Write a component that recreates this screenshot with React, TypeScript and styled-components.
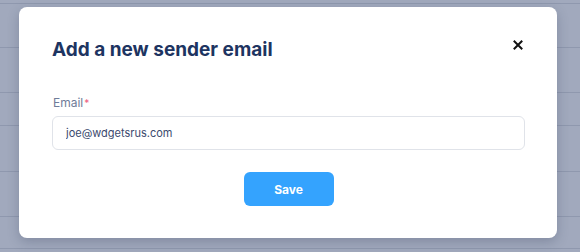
import React from 'react';
import styled, { createGlobalStyle } from 'styled-components';

const GlobalStyle = createGlobalStyle`
  html, body {
    margin: 0;
    padding: 0;
    width: 580px;
    height: 252px;
    overflow: hidden;
    font-family: Inter, "Noto Sans", sans-serif;
  }
`

const Page = styled.div`
  position: relative;
  width: 580px;
  height: 252px;
  background: #a1a9bd;
  overflow: hidden;
`

const BackTable = styled.div`
  display: flex;
  flex-direction: column;
  padding-top: 3px;
`

const BackRow = styled.div<{ h: number }>`
  height: ${props => props.h}px;
  border-top: 1px solid #8f98ae;
  box-sizing: border-box;
`

const Modal = styled.div`
  position: absolute;
  left: 19px;
  top: 7px;
  width: 538px;
  height: 231px;
  box-sizing: border-box;
  background: #fff;
  border-radius: 8px;
  box-shadow: 0 4px 12px rgba(40, 50, 80, 0.25);
  padding: 31px 32px 0 33px;
  display: flex;
  flex-direction: column;
`

const Header = styled.div`
  display: flex;
  align-items: flex-start;
  justify-content: space-between;
`

const Title = styled.h2`
  margin: 0;
  font-size: 19px;
  line-height: 24px;
  font-weight: 700;
  color: #1d3461;
`

const CloseButton = styled.button`
  border: none;
  background: none;
  padding: 0;
  margin: 2px 2px 0 0;
  width: 10px;
  height: 10px;
  display: flex;
  cursor: pointer;
`

const Field = styled.div`
  margin-top: 33px;
  display: flex;
  flex-direction: column;
`

const Label = styled.label`
  font-size: 12px;
  line-height: 16px;
  color: #6f7c99;
  margin-left: 1px;
  span {
    color: #ee5c80;
    font-size: 10px;
    vertical-align: top;
    margin-left: 1px;
  }
`

const Input = styled.input`
  margin-top: 5px;
  height: 34px;
  box-sizing: border-box;
  border: 1px solid #e0e3e9;
  border-radius: 6px;
  padding: 0 13px;
  font-family: Inter, "Noto Sans", sans-serif;
  font-size: 11px;
  color: #3b4a6e;
  outline: none;
`

const Footer = styled.div`
  display: flex;
  justify-content: center;
  margin-top: 22px;
`

const SaveButton = styled.button`
  width: 90px;
  height: 34px;
  border: none;
  border-radius: 6px;
  background: #34a3fe;
  color: #fff;
  font-family: Inter, "Noto Sans", sans-serif;
  font-size: 12px;
  font-weight: 700;
  cursor: pointer;
`

const rows = [44, 45, 33, 46, 45, 32, 20]

const App = () => {
  return (
    <>
      <GlobalStyle />
      <Page>
        <BackTable>
          {rows.map((h, i) => (
            <BackRow h={h} key={i} />
          ))}
        </BackTable>
        <Modal>
          <Header>
            <Title>Add a new sender email</Title>
            <CloseButton aria-label="Close">
              <svg width="10" height="10" viewBox="0 0 10 10">
                <path d="M1.5 1.5 L8.5 8.5 M8.5 1.5 L1.5 8.5" stroke="#111" strokeWidth="2" strokeLinecap="square" />
              </svg>
            </CloseButton>
          </Header>
          <Field>
            <Label>Email<span>*</span></Label>
            <Input defaultValue="joe@wdgetsrus.com" />
          </Field>
          <Footer>
            <SaveButton>Save</SaveButton>
          </Footer>
        </Modal>
      </Page>
    </>
  );
};

export default App;
